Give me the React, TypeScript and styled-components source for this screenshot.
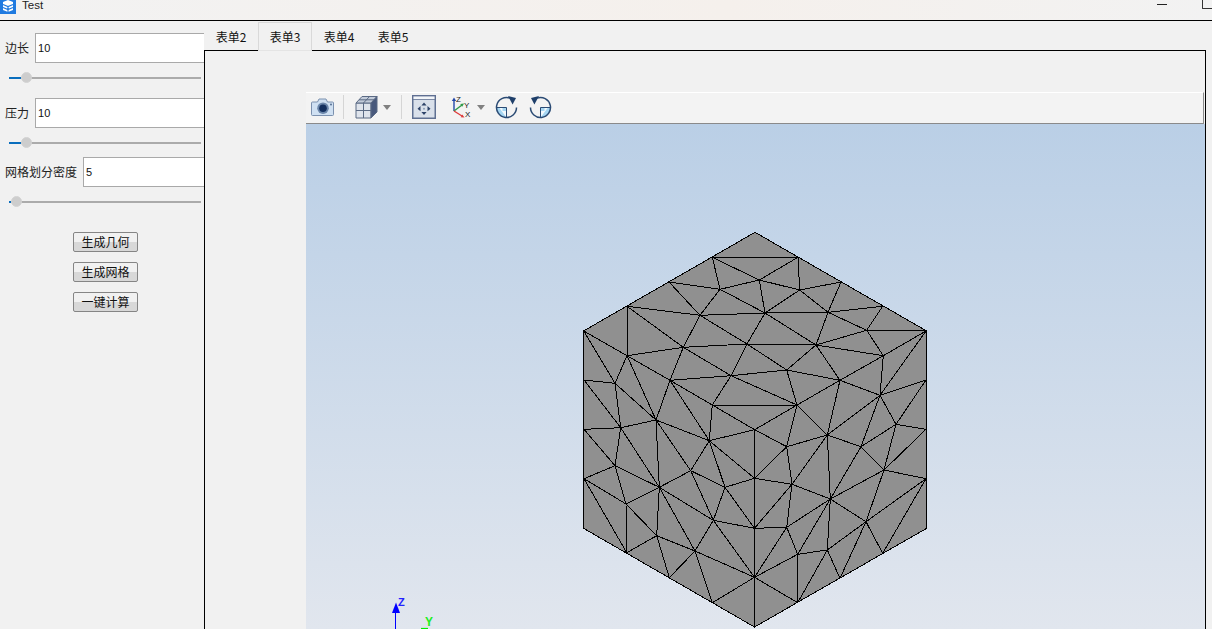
import React from 'react';
import styled, { createGlobalStyle } from 'styled-components';

const GlobalStyle = createGlobalStyle`
html, body {
    margin: 0;
    padding: 0;
    width: 100%;
    height: 100%;
    overflow: hidden;
    background: #f1f1f1;
}
#root {
    height: 100%;
}
* {
    box-sizing: border-box;
}
`;

// mesh nodes, in page pixels
const NODES: Record<string, [number, number]> = {
    A: [755, 232.3], B: [712.3, 257.3], C: [798, 257.3], D: [759.3, 280], E: [720, 289.3], F: [799.7, 290],
    G: [669, 282], H: [841, 282], I: [627, 306.3], J: [882.7, 306.3], K: [700, 315.3], L: [765, 313],
    M: [828, 312.3], N: [583.7, 331], O: [926, 331], P: [866.7, 330.3], Q: [683.3, 347.3], R: [747, 344],
    S: [816, 345], T: [627, 355.7], U: [883.3, 355.7], V: [786.7, 370], W: [731, 375.7], X: [840, 380.3],
    Y: [670, 380.3], Z: [615, 383.3], a: [584, 380], b: [926, 380], c: [880, 395.3], d: [712.3, 405],
    e: [797, 405], f: [656, 420], g: [896, 424.3], h: [584, 429.3], i: [620.7, 427.7], j: [709.3, 440.7],
    k: [754.7, 429.7], l: [786.7, 446.7], m: [827.3, 435], n: [861, 446.7], o: [926, 429.3], p: [615, 465.7],
    q: [690.7, 470.7], r: [884, 470], s: [584, 478.7], t: [659.3, 487.3], u: [725, 487.3], v: [754.5, 478.3],
    w: [792, 484.3], x: [830.3, 499], y: [926, 478.7], z: [626, 504], aa: [713.3, 520.3], ab: [754.5, 528.3],
    ac: [786.7, 527.3], ad: [866, 521.7], ae: [583.5, 528.3], af: [926.7, 528.3], ag: [656.7, 535.7],
    ah: [626.7, 552.7], ai: [695, 551], aj: [797.7, 554.3], ak: [827.3, 550], al: [882.7, 553.3],
    am: [669.3, 577.7], an: [754.5, 577.3], ao: [840, 578.3], ap: [712.3, 602.7], aq: [797.7, 602.7],
    ar: [754.5, 627],
};

const EDGES = `B-C B-D C-D B-E C-F D-E D-F D-L E-G E-K E-L F-H F-L F-M G-K H-M I-K I-Q I-T K-L L-M M-J M-P M-S
J-P P-O P-S P-U O-U K-Q K-R L-R L-S Q-R R-S Q-T Q-Y Q-W R-W R-V S-V S-U S-X N-T N-Z T-Z T-Y T-f a-Z a-i Z-i Z-f
Y-f Y-d Y-W W-d W-V W-e V-X V-e X-e X-c X-U U-c O-c c-b b-g c-g d-e d-j d-k e-k e-l e-m X-m c-m c-n Y-j
f-i f-j f-t f-q i-h h-p i-p i-t p-s p-t p-z s-z s-ah z-t z-ag z-ah t-q t-ag t-aa t-ai q-j q-u q-aa j-u j-k j-v
u-v u-aa u-ab k-l k-v l-m l-v l-w m-w m-x m-n n-g g-o g-r n-r n-x o-r r-y r-x r-ad y-ad y-al v-w k-ab w-ab w-ac
x-w x-ac x-ad x-aj x-ak aa-ab ab-ac aa-ai aa-an ab-an ac-an ac-aj ad-ak ad-ao ad-al ak-aj ak-ao ak-aq aj-an aj-aq
ag-ah ag-ai ag-am ai-am ai-ap ai-an an-ap an-aq an-ar`
    .split(/\s+/)
    .map((e) => e.split('-'));

const SLIDERS = [
    { id: 'side', label: '边长', value: '10', thumb: 17, height: 65 },
    { id: 'press', label: '压力', value: '10', thumb: 17, height: 59 },
    { id: 'mesh', label: '网格划分密度', value: '5', thumb: 7, height: 75 },
];

const TABS = ['表单2', '表单3', '表单4', '表单5'];
const ACTIONS = ['生成几何', '生成网格', '一键计算'];

const AppIcon = () => (
    <svg width="16" height="16" viewBox="0 0 16 16">
        <rect width="16" height="16" fill="#1f7ae0" />
        <path d="M3 4 8 2l5 2v8l-5 2-5-2z" fill="#fff" />
        <path d="M3 6.5 8 8.5l5-2M3 9.5l5 2 5-2M8 8.5V14" stroke="#1f7ae0" strokeWidth="1.2" fill="none" />
    </svg>
);

const CameraIcon = () => (
    <svg width="24" height="20" viewBox="0 0 24 20">
        <path d="M1.5 5h5l1.5-3h7l1.5 3h5a1 1 0 0 1 1 1v11.5a1 1 0 0 1-1 1h-20a1 1 0 0 1-1-1V6a1 1 0 0 1 1-1z" fill="#cfe0f2" stroke="#7b90ae" />
        <circle cx="12" cy="11.2" r="5.8" fill="#6b86aa" />
        <circle cx="12" cy="11.2" r="3.8" fill="#14305f" />
        <circle cx="20" cy="7.5" r="0.9" fill="#4a6388" />
    </svg>
);

const CubeIcon = () => (
    <svg width="23" height="24" viewBox="0 0 23 24">
        <path d="M1 8h15v15H1z" fill="#dfe4ec" stroke="#5b6a84" />
        <path d="M1 8l6-6.5h15L16 8z" fill="#c3ccda" stroke="#5b6a84" />
        <path d="M16 8l6-6.5V17l-6 6z" fill="#48597c" stroke="#5b6a84" />
        <path d="M8.5 8v15M1 15.5h15M8.5 8l6-6.5M4 4.8h15" stroke="#5b6a84" fill="none" />
    </svg>
);

const FitIcon = () => (
    <svg width="24" height="24" viewBox="0 0 24 24">
        <rect x="0.75" y="0.75" width="22.5" height="22.5" fill="#d9e0ea" stroke="#5f7092" strokeWidth="1.5" />
        <path d="M1 1h22v3.5H1z" fill="#f2f5f9" stroke="#5f7092" strokeWidth="0.8" />
        <path d="M12 7.5l-2.6 3h5.2zM12 20l-2.6-3h5.2zM5.5 13.7l3-2.6v5.2zM18.5 13.7l-3-2.6v5.2z" fill="#2d4268" />
        <circle cx="12" cy="13.7" r="1" fill="#8fa0b8" />
    </svg>
);

const AxesIcon = () => (
    <svg width="22" height="24" viewBox="0 0 22 24" fontFamily="'Liberation Sans', sans-serif" fontSize="8">
        <path d="M4 16V5" stroke="#2347a8" strokeWidth="1.4" />
        <path d="M4 2.5l-2.2 3.5h4.4z" fill="#2347a8" />
        <path d="M4 16l8-6" stroke="#2f9a4a" strokeWidth="1.4" />
        <path d="M14 8.5l-3.8 0.6 2 2.6z" fill="#2f9a4a" />
        <path d="M4 16l8 5" stroke="#df3b3b" strokeWidth="1.4" />
        <path d="M14.5 22.5l-3.8-0.2 1.6-2.8z" fill="#df3b3b" />
        <text x="6" y="6.5" fill="#222">Z</text>
        <text x="14" y="12.5" fill="#222">Y</text>
        <text x="15" y="22" fill="#222">X</text>
    </svg>
);

const RotateIcon = ({ flip }: { flip?: boolean }) => (
    <svg width="23" height="23" viewBox="0 0 23 23" style={flip ? { transform: 'scaleX(-1)' } : undefined}>
        <path d="M1.5 11.5h10v10A10 10 0 0 1 1.5 11.5z" fill="#a5d6f2" />
        <path d="M4 11.5h3.5v3.5h4v6.5" fill="#ffffff" opacity="0.85" />
        <path d="M11.5 11.5H1.5M11.5 11.5V21.5" stroke="#2b4b74" strokeWidth="1" fill="none" />
        <path d="M15 2.1A10 10 0 1 0 21.5 11.5" stroke="#2b4b74" strokeWidth="1.5" fill="none" />
        <path d="M13 0l8 2-3.4 6.6z" fill="#1f3f6a" />
    </svg>
);

const App = () => {
    return (
        <Page>
            <GlobalStyle />
            <TitleBar>
                <AppIconBox><AppIcon /></AppIconBox>
                <TitleText>Test</TitleText>
                <WindowButtons>
                    <MinimizeMark />
                    <MaximizeMark />
                </WindowButtons>
            </TitleBar>
            <Main>
                <Sidebar>
                    {SLIDERS.map((s) => (
                        <Field key={s.id} $h={s.height}>
                            <FieldRow>
                                <FieldLabel>{s.label}</FieldLabel>
                                <ValueInput readOnly value={s.value} />
                            </FieldRow>
                            <SliderTrack>
                                <SliderFill style={{ width: s.thumb - 5 }} />
                                <SliderThumb style={{ left: s.thumb - 5 }} />
                            </SliderTrack>
                        </Field>
                    ))}
                    <ActionList>
                        {ACTIONS.map((a) => (
                            <ActionButton key={a}>{a}</ActionButton>
                        ))}
                    </ActionList>
                </Sidebar>
                <Content>
                    <TabBar>
                        {TABS.map((t) => (
                            <Tab key={t} $active={t === '表单3'}>{t}</Tab>
                        ))}
                    </TabBar>
                    <TabPane>
                        <ViewerToolbar>
                            <ToolIcon $w={24}><CameraIcon /></ToolIcon>
                            <ToolDivider $left={8} $right={11} />
                            <ToolIcon $w={23}><CubeIcon /></ToolIcon>
                            <CaretShape />
                            <ToolDivider $left={10} $right={10} />
                            <ToolIcon $w={24}><FitIcon /></ToolIcon>
                            <ToolIcon $w={22} $ml={14}><AxesIcon /></ToolIcon>
                            <CaretShape />
                            <ToolIcon $w={23} $ml={10}><RotateIcon /></ToolIcon>
                            <ToolIcon $w={23} $ml={11}><RotateIcon flip /></ToolIcon>
                        </ViewerToolbar>
                        <Viewport>
                            <svg width="899" height="505" viewBox="306 124 899 505" style={{ display: 'block' }}>
                                <g shapeRendering="crispEdges">
                                    <polygon
                                        points="755,232.3 926.7,331 926.7,528.3 754.5,627 583.5,528.3 583.5,331"
                                        fill="#909090"
                                        stroke="#000"
                                        strokeWidth="1"
                                    />
                                    {EDGES.map(([a, b]) => (
                                        <line
                                            key={a + '-' + b}
                                            x1={NODES[a][0]}
                                            y1={NODES[a][1]}
                                            x2={NODES[b][0]}
                                            y2={NODES[b][1]}
                                            stroke="#000"
                                            strokeWidth="1"
                                        />
                                    ))}
                                </g>
                                <path d="M395.5 610V629" stroke="#0000ff" strokeWidth="1" />
                                <path d="M396 602.5l-4 10.5h8z" fill="#0000ff" />
                                <text x="398" y="606" fill="#2222ff" fontFamily="'Liberation Sans', sans-serif" fontWeight="700" fontSize="11">Z</text>
                                <text x="425" y="626" fill="#22ee22" fontFamily="'Liberation Sans', sans-serif" fontWeight="700" fontSize="12">Y</text>
                                <path d="M421 628.5h7" stroke="#00ee00" strokeWidth="1.2" />
                            </svg>
                        </Viewport>
                    </TabPane>
                </Content>
            </Main>
        </Page>
    );
};

export default App;

const Page = styled.div`
height : 100%;
display : flex;
flex-direction : column;
background : #f1f1f1;
font-family : "Noto Sans CJK SC", "Liberation Sans", sans-serif;
color : #111;
overflow : hidden;
`;
const TitleBar = styled.div`
height : 21px;
flex : none;
display : flex;
align-items : flex-start;
background : linear-gradient(90deg, #f2f2f2, #f5f0ec 60%, #f2f2f2);
border-bottom : 1px solid #000;
overflow : hidden;
`;
const AppIconBox = styled.div`
margin-top : -5px;
width : 16px;
height : 16px;
`;
const TitleText = styled.div`
margin-left : 6px;
font : 11.5px/10px "Liberation Sans", sans-serif;
height : 10px;
color : #222;
`;
const WindowButtons = styled.div`
margin-left : auto;
margin-right : -2px;
display : flex;
align-items : flex-start;
`;
const MinimizeMark = styled.div`
width : 10px;
height : 1px;
margin : 4px 35px 0 0;
background : #222;
`;
const MaximizeMark = styled.div`
width : 12px;
height : 9px;
border : 1px solid #333;
border-top : none;
border-radius : 0 0 1px 1px;
`;
const Main = styled.div`
flex : 1;
display : flex;
min-height : 0;
`;
const Sidebar = styled.div`
width : 204px;
flex : none;
overflow : hidden;
padding-top : 12px;
display : flex;
flex-direction : column;
`;
const Field = styled.div<{ $h: number }>`
display : flex;
flex-direction : column;
flex : none;
height : ${(p) => p.$h}px;
`;
const FieldRow = styled.div`
display : flex;
align-items : center;
height : 30px;
padding-left : 5px;
`;
const FieldLabel = styled.div`
font-size : 12px;
line-height : 30px;
margin-right : 6px;
color : #222;
white-space : nowrap;
`;
const ValueInput = styled.input`
flex : none;
width : 200px;
height : 30px;
border : 1px solid #a9a9a9;
background : #fff;
padding : 0 2px;
font : 11px "Liberation Sans", sans-serif;
color : #111;
outline : none;
`;
const SliderTrack = styled.div`
position : relative;
margin : 14px 0 0 9px;
width : 192px;
height : 2px;
background : #ababab;
`;
const SliderFill = styled.div`
height : 2px;
background : #0a6ebd;
`;
const SliderThumb = styled.div`
position : absolute;
top : -5px;
width : 11px;
height : 11px;
border-radius : 50%;
background : #cdcdcd;
border : 1px solid #d4d4d4;
`;
const ActionList = styled.div`
display : flex;
flex-direction : column;
align-items : center;
gap : 10px;
padding-left : 7px;
`;
const ActionButton = styled.button`
width : 65px;
height : 20px;
padding : 0;
border : 1px solid #858585;
border-radius : 2px;
background : linear-gradient(#f1f1f1 50%, #d8d8d8 50%);
font-family : "Noto Sans CJK SC", sans-serif;
font-size : 12px;
line-height : 18px;
color : #111;
`;
const Content = styled.div`
flex : 1;
min-width : 0;
display : flex;
flex-direction : column;
`;
const TabBar = styled.div`
height : 29px;
flex : none;
display : flex;
align-items : flex-start;
padding-top : 1px;
position : relative;
z-index : 1;
`;
const Tab = styled.div<{ $active?: boolean }>`
width : 54px;
height : ${(p) => (p.$active ? 29 : 28)}px;
display : flex;
align-items : center;
justify-content : center;
padding-bottom : ${(p) => (p.$active ? 1 : 0)}px;
font-size : 12px;
color : #111;
background : ${(p) => (p.$active ? '#f1f1f1' : 'transparent')};
border : 1px solid ${(p) => (p.$active ? '#d9d9d9' : 'transparent')};
border-bottom : 1px solid ${(p) => (p.$active ? '#e4e4e4' : 'transparent')};
`;
const TabPane = styled.div`
flex : 1;
min-height : 0;
margin-right : 6px;
border : 1px solid #000;
border-bottom : none;
padding : 41px 0 0 101px;
display : flex;
flex-direction : column;
`;
const ViewerToolbar = styled.div`
height : 32px;
flex : none;
margin-right : 1px;
display : flex;
align-items : center;
padding : 0 0 2px 5px;
background : #f3f3f3;
border-top : 1px solid #fff;
border-right : 1px solid #8a8a8a;
border-bottom : 1px solid #8a8a8a;
`;
const ToolIcon = styled.div<{ $w: number; $ml?: number }>`
width : ${(p) => p.$w}px;
margin-left : ${(p) => p.$ml ?? 0}px;
display : flex;
align-items : center;
justify-content : center;
`;
const ToolDivider = styled.div<{ $left: number; $right: number }>`
width : 1px;
height : 24px;
margin : 0 ${(p) => p.$right}px 0 ${(p) => p.$left}px;
background : #d5d5d5;
`;
const CaretShape = styled.div`
width : 0;
height : 0;
margin-left : 5px;
border-left : 4px solid transparent;
border-right : 4px solid transparent;
border-top : 5px solid #808080;
`;
const Viewport = styled.div`
flex : 1;
min-height : 0;
overflow : hidden;
background : linear-gradient(#bacfe6, #e1e6ee);
`;
